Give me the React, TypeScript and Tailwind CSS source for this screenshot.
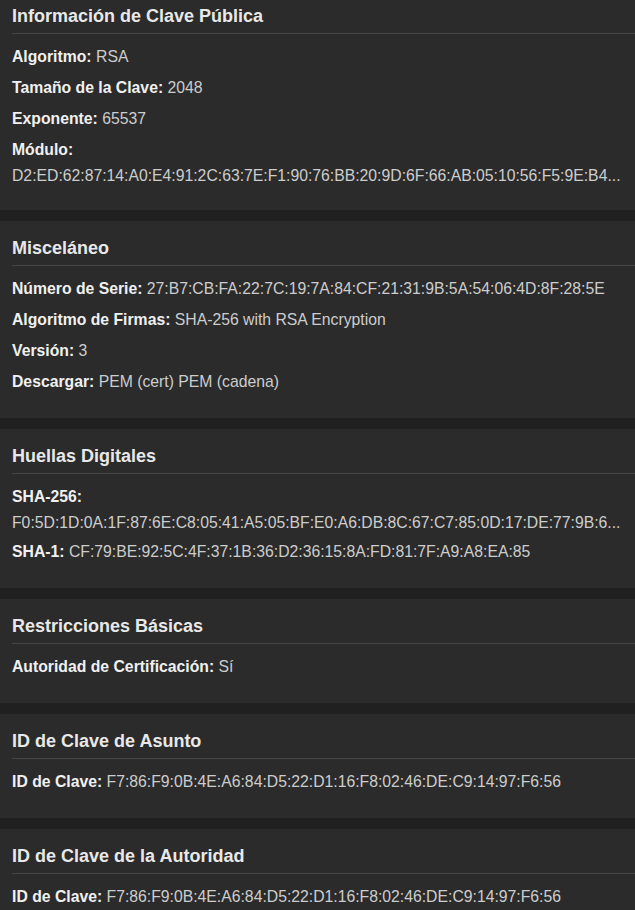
import type { ReactNode } from 'react';

type Field = { label: string; value: string; stacked?: boolean };

const sections: { title: string; fields: Field[] }[] = [
  {
    title: 'Información de Clave Pública',
    fields: [
      { label: 'Algoritmo:', value: 'RSA' },
      { label: 'Tamaño de la Clave:', value: '2048' },
      { label: 'Exponente:', value: '65537' },
      {
        label: 'Módulo:',
        value: 'D2:ED:62:87:14:A0:E4:91:2C:63:7E:F1:90:76:BB:20:9D:6F:66:AB:05:10:56:F5:9E:B4...',
        stacked: true,
      },
    ],
  },
  {
    title: 'Misceláneo',
    fields: [
      { label: 'Número de Serie:', value: '27:B7:CB:FA:22:7C:19:7A:84:CF:21:31:9B:5A:54:06:4D:8F:28:5E' },
      { label: 'Algoritmo de Firmas:', value: 'SHA-256 with RSA Encryption' },
      { label: 'Versión:', value: '3' },
      { label: 'Descargar:', value: 'PEM (cert) PEM (cadena)' },
    ],
  },
  {
    title: 'Huellas Digitales',
    fields: [
      {
        label: 'SHA-256:',
        value: 'F0:5D:1D:0A:1F:87:6E:C8:05:41:A5:05:BF:E0:A6:DB:8C:67:C7:85:0D:17:DE:77:9B:6...',
        stacked: true,
      },
      { label: 'SHA-1:', value: 'CF:79:BE:92:5C:4F:37:1B:36:D2:36:15:8A:FD:81:7F:A9:A8:EA:85' },
    ],
  },
  {
    title: 'Restricciones Básicas',
    fields: [{ label: 'Autoridad de Certificación:', value: 'Sí' }],
  },
  {
    title: 'ID de Clave de Asunto',
    fields: [{ label: 'ID de Clave:', value: 'F7:86:F9:0B:4E:A6:84:D5:22:D1:16:F8:02:46:DE:C9:14:97:F6:56' }],
  },
  {
    title: 'ID de Clave de la Autoridad',
    fields: [{ label: 'ID de Clave:', value: 'F7:86:F9:0B:4E:A6:84:D5:22:D1:16:F8:02:46:DE:C9:14:97:F6:56' }],
  },
];

function Card({ title, children }: { title: string; children: ReactNode }) {
  return (
    <section className="bg-[#2b2b2b] pt-[16px] pb-[15px]">
      <h2 className="ml-3 pb-[6px] border-b border-[#454545] text-[18px] leading-[22px] font-bold text-[#e8e8e8]">
        {title}
      </h2>
      <div className="pt-[13px] px-3">{children}</div>
    </section>
  );
}

export default function App() {
  return (
    <div
      className="h-[910px] w-[635px] overflow-hidden bg-[#202020]"
      style={{ fontFamily: '"Liberation Sans", Arial, sans-serif' }}
    >
      <div className="-mt-[11px] flex flex-col gap-[11px]">
        {sections.map((s) => (
          <Card key={s.title} title={s.title}>
            {s.fields.map((f) =>
              f.stacked ? (
                <div key={f.label} className="mb-[9px] text-[15.75px] leading-[20px]">
                  <div className="font-bold text-[#f0f0f0]">{f.label}</div>
                  <div className="mt-[6px] whitespace-nowrap overflow-hidden text-[#cdcdcd]">{f.value}</div>
                </div>
              ) : (
                <div key={f.label} className="mb-[11px] text-[15.75px] leading-[20px] whitespace-nowrap">
                  <span className="font-bold text-[#f0f0f0]">{f.label}</span>{' '}
                  <span className="text-[#cdcdcd]">{f.value}</span>
                </div>
              )
            )}
          </Card>
        ))}
      </div>
    </div>
  );
}
